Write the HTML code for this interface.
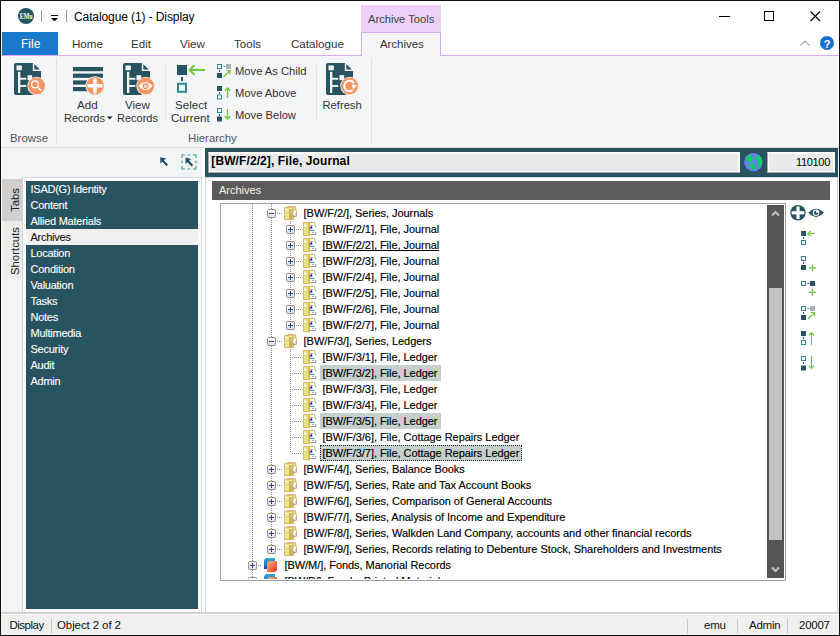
<!DOCTYPE html><html><head><meta charset="utf-8"><style>
html,body{margin:0;padding:0;}
body{width:840px;height:636px;position:relative;overflow:hidden;background:#fff;font-family:"Liberation Sans", sans-serif;}
div{box-sizing:border-box;}
svg{display:block;}
</style></head><body>
<svg style="position:absolute;left:18px;top:8px;" width="16" height="16" viewBox="0 0 16 16"><circle cx="8" cy="8" r="8" fill="#275460"/><text x="1.8" y="11.3" font-family="Liberation Serif" font-size="8.4" fill="#fff" font-weight="bold" textLength="12.8" lengthAdjust="spacingAndGlyphs">EMu</text></svg>
<div style="position:absolute;left:41px;top:10px;width:1px;height:12px;background:#9a9a9a"></div>
<div style="position:absolute;left:51px;top:15px;width:7px;height:1px;background:#000"></div>
<svg style="position:absolute;left:51px;top:17px;" width="7" height="5" viewBox="0 0 7 5"><path d="M0 1 L7 1 L3.5 4.3 Z" fill="#000"/></svg>
<div style="position:absolute;left:66px;top:10px;width:1px;height:12px;background:#9a9a9a"></div>
<div style="position:absolute;top:10.84px;font-size:12px;line-height:12px;color:#000;white-space:nowrap;letter-spacing:-0.1px;left:74px;">Catalogue (1) - Display</div>
<div style="position:absolute;left:719px;top:16px;width:11px;height:1px;background:#000"></div>
<div style="position:absolute;left:764px;top:11px;width:10px;height:10px;border:1px solid #000"></div>
<svg style="position:absolute;left:810px;top:11px;" width="11" height="11" viewBox="0 0 11 11"><path d="M0.5 0.5 L10 10 M10 0.5 L0.5 10" stroke="#000" stroke-width="1.1"/></svg>
<div style="position:absolute;left:361px;top:5px;width:80px;height:27px;background:#ecd0f9"></div>
<div style="position:absolute;top:13.52px;font-size:11.2px;line-height:11.2px;color:#444;white-space:nowrap;left:368px;">Archive Tools</div>
<div style="position:absolute;left:2px;top:32px;width:56px;height:23px;background:#1979ca"></div>
<div style="position:absolute;top:37.84px;font-size:12px;line-height:12px;color:#fff;white-space:nowrap;left:21px;">File</div>
<div style="position:absolute;top:38.18px;font-size:11.6px;line-height:11.6px;color:#333;white-space:nowrap;left:72px;">Home</div>
<div style="position:absolute;top:38.18px;font-size:11.6px;line-height:11.6px;color:#333;white-space:nowrap;left:131px;">Edit</div>
<div style="position:absolute;top:38.18px;font-size:11.6px;line-height:11.6px;color:#333;white-space:nowrap;left:180px;">View</div>
<div style="position:absolute;top:38.18px;font-size:11.6px;line-height:11.6px;color:#333;white-space:nowrap;left:234px;">Tools</div>
<div style="position:absolute;top:38.18px;font-size:11.6px;line-height:11.6px;color:#333;white-space:nowrap;left:291px;">Catalogue</div>
<div style="position:absolute;left:1px;top:55px;width:838px;height:1px;background:#d9a9f2"></div>
<div style="position:absolute;left:361px;top:32px;width:80px;height:24px;background:#f4f5f7;border:1px solid #d9a9f2;border-bottom:none"></div>
<div style="position:absolute;top:39.15px;font-size:11.4px;line-height:11.4px;color:#333;white-space:nowrap;left:380px;">Archives</div>
<svg style="position:absolute;left:800px;top:40px;" width="10" height="6" viewBox="0 0 10 6"><path d="M0.5 5.5 L5 1 L9.5 5.5" stroke="#aaa" stroke-width="1.2" fill="none"/></svg>
<svg style="position:absolute;left:820px;top:36px;" width="14" height="14" viewBox="0 0 14 14"><circle cx="7" cy="7" r="7" fill="#1b6fd1"/><text x="7" y="11.5" font-family="Liberation Sans" font-weight="bold" font-size="11" fill="#fff" text-anchor="middle">?</text></svg>
<div style="position:absolute;left:1px;top:56px;width:838px;height:91px;background:#f4f5f7"></div>
<div style="position:absolute;left:1px;top:147px;width:838px;height:1px;background:#dcdcdc"></div>
<div style="position:absolute;left:56px;top:58px;width:1px;height:86px;background:#e2e3e5"></div>
<div style="position:absolute;left:371px;top:58px;width:1px;height:86px;background:#e2e3e5"></div>
<div style="position:absolute;left:165px;top:65px;width:1px;height:55px;background:#e2e3e5"></div>
<div style="position:absolute;left:316px;top:65px;width:1px;height:55px;background:#e2e3e5"></div>
<svg style="position:absolute;left:14px;top:63px;" width="33" height="34" viewBox="0 0 33 34"><path d="M2 0 H18.8 V8.1 H27 V30 Q27 32 25 32 H2 Q0 32 0 30 V2 Q0 0 2 0 Z" fill="#275460"/>
<path d="M20.3 1.2 V6.6 H25.9 Z" fill="#275460"/>
<rect x="2.5" y="2.5" width="5.3" height="4.7" fill="#f4f5f7"/>
<rect x="4" y="8.8" width="2.3" height="21.2" fill="#f4f5f7"/>
<rect x="6" y="14.8" width="6.3" height="1.9" fill="#f4f5f7"/>
<rect x="6" y="22" width="6.3" height="1.9" fill="#f4f5f7"/>
<rect x="13.5" y="12.2" width="4.7" height="5" fill="#f4f5f7"/>
<g transform="translate(0,0)"><circle cx="22.6" cy="23" r="9.3" fill="#f4f5f7"/>
<circle cx="22.6" cy="23" r="8.5" fill="#f99460"/><circle cx="21" cy="21.4" r="3.4" fill="none" stroke="#fff" stroke-width="1.3"/><path d="M23.4 23.8 L27.2 27.8" stroke="#fff" stroke-width="1.5"/></g></svg>
<svg style="position:absolute;left:123px;top:63px;" width="33" height="34" viewBox="0 0 33 34"><path d="M2 0 H18.8 V8.1 H27 V30 Q27 32 25 32 H2 Q0 32 0 30 V2 Q0 0 2 0 Z" fill="#275460"/>
<path d="M20.3 1.2 V6.6 H25.9 Z" fill="#275460"/>
<rect x="2.5" y="2.5" width="5.3" height="4.7" fill="#f4f5f7"/>
<rect x="4" y="8.8" width="2.3" height="21.2" fill="#f4f5f7"/>
<rect x="6" y="14.8" width="6.3" height="1.9" fill="#f4f5f7"/>
<rect x="6" y="22" width="6.3" height="1.9" fill="#f4f5f7"/>
<rect x="13.5" y="12.2" width="4.7" height="5" fill="#f4f5f7"/>
<g transform="translate(0,0)"><circle cx="22.6" cy="23" r="9.3" fill="#f4f5f7"/>
<circle cx="22.6" cy="23" r="8.5" fill="#f99460"/><path d="M15.6 23 Q22.6 15 29.6 23 Q22.6 31 15.6 23 Z" fill="#fff"/><circle cx="22.6" cy="23" r="2.4" fill="#fff" stroke="#f99460" stroke-width="1.4"/><path d="M22.6 21.6 V23 H24" stroke="#f99460" stroke-width="0.9" fill="none"/></g></svg>
<svg style="position:absolute;left:326px;top:63px;" width="33" height="34" viewBox="0 0 33 34"><path d="M2 0 H18.8 V8.1 H27 V30 Q27 32 25 32 H2 Q0 32 0 30 V2 Q0 0 2 0 Z" fill="#275460"/>
<path d="M20.3 1.2 V6.6 H25.9 Z" fill="#275460"/>
<rect x="2.5" y="2.5" width="5.3" height="4.7" fill="#f4f5f7"/>
<rect x="4" y="8.8" width="2.3" height="21.2" fill="#f4f5f7"/>
<rect x="6" y="14.8" width="6.3" height="1.9" fill="#f4f5f7"/>
<rect x="6" y="22" width="6.3" height="1.9" fill="#f4f5f7"/>
<rect x="13.5" y="12.2" width="4.7" height="5" fill="#f4f5f7"/>
<g transform="translate(1,0)"><circle cx="22.6" cy="23" r="9.3" fill="#f4f5f7"/>
<circle cx="22.6" cy="23" r="8.5" fill="#f99460"/><path d="M26.01 27.06 A5.3 5.3 0 1 1 26.94 19.96" fill="none" stroke="#fff" stroke-width="2"/><path d="M24.6 21.2 L30 22.2 L26.3 26.2 Z" fill="#fff"/></g></svg>
<svg style="position:absolute;left:73px;top:66px;" width="33" height="30" viewBox="0 0 33 30"><rect x="0" y="1" width="30" height="4.2" fill="#275460"/>
<rect x="0" y="7.6" width="30" height="4.2" fill="#275460"/>
<rect x="0" y="14.4" width="30" height="4.2" fill="#275460"/>
<rect x="0" y="21" width="30" height="4.2" fill="#275460"/>
<circle cx="22" cy="19.8" r="9.6" fill="#f4f5f7"/>
<circle cx="22" cy="19.8" r="8.8" fill="#f99460"/>
<path d="M22 13.6 V26 M15.8 19.8 H28.2" stroke="#fff" stroke-width="3.6" stroke-linecap="round"/></svg>
<div style="position:absolute;top:132.55px;font-size:11.4px;line-height:11.4px;color:#555;white-space:nowrap;left:10px;">Browse</div>
<div style="position:absolute;top:98.78px;font-size:11.6px;line-height:11.6px;color:#333;white-space:nowrap;left:77px;">Add</div>
<div style="position:absolute;top:113.29px;font-size:11px;line-height:11px;color:#333;white-space:nowrap;left:64px;">Records</div>
<svg style="position:absolute;left:107px;top:116px;" width="6" height="4" viewBox="0 0 6 4"><path d="M0 0.5 H5.5 L2.75 3.5 Z" fill="#222"/></svg>
<div style="position:absolute;top:98.78px;font-size:11.6px;line-height:11.6px;color:#333;white-space:nowrap;left:125px;">View</div>
<div style="position:absolute;top:113.29px;font-size:11px;line-height:11px;color:#333;white-space:nowrap;left:117px;">Records</div>
<svg style="position:absolute;left:176px;top:63px;" width="32" height="32" viewBox="0 0 32 32"><rect x="1" y="2" width="10" height="10" fill="#275460"/>
<rect x="5" y="14" width="2" height="4" fill="#275460"/>
<rect x="2" y="20.8" width="8" height="8" fill="#fff" stroke="#2b8a93" stroke-width="2"/>
<path d="M13.5 7 H29" stroke="#72c63c" stroke-width="2"/>
<path d="M18.5 2.2 L13.5 7 L18.5 11.8" stroke="#72c63c" stroke-width="2" fill="none"/></svg>
<div style="position:absolute;top:98.98px;font-size:11.6px;line-height:11.6px;color:#333;white-space:nowrap;left:175px;">Select</div>
<div style="position:absolute;top:111.78px;font-size:11.6px;line-height:11.6px;color:#333;white-space:nowrap;left:171px;">Current</div>
<svg style="position:absolute;left:217px;top:64px;" width="16" height="14" viewBox="0 0 16 14"><rect x="0.5" y="0.5" width="4" height="4" fill="#fff" stroke="#2b8a93" stroke-width="1"/>
<rect x="6.5" y="2" width="2" height="1" fill="#888"/>
<rect x="9" y="0" width="5" height="5" fill="#a8b4b8"/>
<rect x="2" y="6" width="1" height="2" fill="#275460"/>
<rect x="0" y="9" width="5" height="5" fill="#275460"/>
<path d="M6.5 13 L13 6.5 M9.3 6.5 H13 V10.2" stroke="#72c63c" stroke-width="1.2" fill="none"/></svg>
<svg style="position:absolute;left:217px;top:86px;" width="16" height="14" viewBox="0 0 16 14"><rect x="0" y="0" width="5" height="5" fill="#275460"/><rect x="0.5" y="9" width="4" height="4" fill="#fff" stroke="#2b8a93" stroke-width="1"/><rect x="2" y="6" width="1" height="2" fill="#275460"/><path d="M10.5 2 V12 M7.8 4.8 L10.5 2 L13.2 4.8" stroke="#72c63c" stroke-width="1.3" fill="none"/></svg>
<svg style="position:absolute;left:217px;top:108px;" width="16" height="14" viewBox="0 0 16 14"><rect x="0.5" y="0.5" width="4" height="4" fill="#fff" stroke="#2b8a93" stroke-width="1"/><rect x="0" y="8.5" width="5" height="5" fill="#275460"/><rect x="2" y="6" width="1" height="2" fill="#275460"/><path d="M10.5 1 V11 M7.8 8.2 L10.5 11 L13.2 8.2" stroke="#72c63c" stroke-width="1.3" fill="none"/></svg>
<div style="position:absolute;top:65.52px;font-size:11.2px;line-height:11.2px;color:#333;white-space:nowrap;left:235px;">Move As Child</div>
<div style="position:absolute;top:87.52px;font-size:11.2px;line-height:11.2px;color:#333;white-space:nowrap;left:235px;">Move Above</div>
<div style="position:absolute;top:109.52px;font-size:11.2px;line-height:11.2px;color:#333;white-space:nowrap;left:235px;">Move Below</div>
<div style="position:absolute;top:99.52px;font-size:11.2px;line-height:11.2px;color:#333;white-space:nowrap;left:322.5px;">Refresh</div>
<div style="position:absolute;top:132.55px;font-size:11.4px;line-height:11.4px;color:#555;white-space:nowrap;left:188px;">Hierarchy</div>
<div style="position:absolute;left:1px;top:148px;width:838px;height:466px;background:#f3f4f6"></div>
<svg style="position:absolute;left:159px;top:156px;" width="11" height="12" viewBox="0 0 11 12"><path d="M1.2 1.2 L1.4 7.6 L3.3 5.8 L7.4 10.2 L9 8.6 L4.9 4.2 L7.2 2.6 Z" fill="#275460"/></svg>
<svg style="position:absolute;left:181px;top:154px;" width="17" height="17" viewBox="0 0 17 17"><path d="M1 4 V1 H4 M12 1 H15 V4 M15 12 V15 H12 M4 15 H1 V12 M6.8 1 H9.2 M15 6.8 V9.2 M6.8 15 H9.2 M1 6.8 V9.2" fill="none" stroke="#72b6ba" stroke-width="1.7"/><path d="M4.4 3.6 L4.6 10 L6.5 8.2 L10.6 12.6 L12.2 11 L8.1 6.6 L10.4 5 Z" fill="#275460"/></svg>
<div style="position:absolute;left:2px;top:179px;width:20px;height:42px;background:#cfcfcf"></div>
<div style="position:absolute;left:4px;top:221px;width:18px;height:58px;background:#ebebeb"></div>
<div style="position:absolute;left:5px;top:179px;width:20px;height:42px;display:flex;align-items:center;justify-content:center;"><div style="transform:rotate(-90deg);font-size:11.4px;color:#222;white-space:nowrap;">Tabs</div></div>
<div style="position:absolute;left:5px;top:222px;width:20px;height:57px;display:flex;align-items:center;justify-content:center;"><div style="transform:rotate(-90deg);font-size:11.4px;color:#222;white-space:nowrap;">Shortcuts</div></div>
<div style="position:absolute;left:22px;top:177px;width:180px;height:436px;background:#fbfbfb;border:1px solid #d5d5d5"></div>
<div style="position:absolute;left:26px;top:181px;width:172px;height:428px;background:#275460"></div>
<div style="position:absolute;top:184.19px;font-size:11px;line-height:11px;color:#fff;white-space:nowrap;letter-spacing:-0.25px;-webkit-text-stroke:0.1px #fff;left:30.5px;">ISAD(G) Identity</div>
<div style="position:absolute;top:200.19px;font-size:11px;line-height:11px;color:#fff;white-space:nowrap;letter-spacing:-0.25px;-webkit-text-stroke:0.1px #fff;left:30.5px;">Content</div>
<div style="position:absolute;top:216.19px;font-size:11px;line-height:11px;color:#fff;white-space:nowrap;letter-spacing:-0.25px;-webkit-text-stroke:0.1px #fff;left:30.5px;">Allied Materials</div>
<div style="position:absolute;left:26px;top:229px;width:172px;height:16px;background:#f0f0f0"></div>
<div style="position:absolute;top:232.19px;font-size:11px;line-height:11px;color:#111;white-space:nowrap;letter-spacing:-0.25px;-webkit-text-stroke:0.1px #111;left:30.5px;">Archives</div>
<div style="position:absolute;top:248.19px;font-size:11px;line-height:11px;color:#fff;white-space:nowrap;letter-spacing:-0.25px;-webkit-text-stroke:0.1px #fff;left:30.5px;">Location</div>
<div style="position:absolute;top:264.19px;font-size:11px;line-height:11px;color:#fff;white-space:nowrap;letter-spacing:-0.25px;-webkit-text-stroke:0.1px #fff;left:30.5px;">Condition</div>
<div style="position:absolute;top:280.19px;font-size:11px;line-height:11px;color:#fff;white-space:nowrap;letter-spacing:-0.25px;-webkit-text-stroke:0.1px #fff;left:30.5px;">Valuation</div>
<div style="position:absolute;top:296.19px;font-size:11px;line-height:11px;color:#fff;white-space:nowrap;letter-spacing:-0.25px;-webkit-text-stroke:0.1px #fff;left:30.5px;">Tasks</div>
<div style="position:absolute;top:312.19px;font-size:11px;line-height:11px;color:#fff;white-space:nowrap;letter-spacing:-0.25px;-webkit-text-stroke:0.1px #fff;left:30.5px;">Notes</div>
<div style="position:absolute;top:328.19px;font-size:11px;line-height:11px;color:#fff;white-space:nowrap;letter-spacing:-0.25px;-webkit-text-stroke:0.1px #fff;left:30.5px;">Multimedia</div>
<div style="position:absolute;top:344.19px;font-size:11px;line-height:11px;color:#fff;white-space:nowrap;letter-spacing:-0.25px;-webkit-text-stroke:0.1px #fff;left:30.5px;">Security</div>
<div style="position:absolute;top:360.19px;font-size:11px;line-height:11px;color:#fff;white-space:nowrap;letter-spacing:-0.25px;-webkit-text-stroke:0.1px #fff;left:30.5px;">Audit</div>
<div style="position:absolute;top:376.19px;font-size:11px;line-height:11px;color:#fff;white-space:nowrap;letter-spacing:-0.25px;-webkit-text-stroke:0.1px #fff;left:30.5px;">Admin</div>
<div style="position:absolute;left:202px;top:148px;width:3px;height:465px;background:#fff"></div>
<div style="position:absolute;left:205px;top:177px;width:633px;height:437px;background:#fff;border:1px solid #d5d5d5;border-bottom:2px solid #d0d0d0"></div>
<div style="position:absolute;left:205px;top:148px;width:633px;height:29px;background:#275460"></div>
<div style="position:absolute;left:208px;top:152px;width:532px;height:21px;background:#e9eaec;border:1px solid #fbfbfb;border-left-color:#a9a9a9;border-bottom-color:#a9a9a9;box-shadow:inset 1px -1px 0 #fbfbfb, inset -1px 1px 0 #fbfbfb"></div>
<div style="position:absolute;left:211.3px;top:152px;font-size:12px;line-height:18px;font-weight:bold;color:#000;white-space:nowrap;letter-spacing:0.1px">[BW/F/2/2], File, Journal</div>
<svg style="position:absolute;left:744px;top:152px;" width="19" height="20" viewBox="0 0 19 20"><circle cx="9.4" cy="10.1" r="9.2" fill="#6a80f0"/><path d="M2.2 7 Q3 3.5 6.5 3 Q9 3.2 9 6 Q8.6 9.5 6 10.6 Q3.5 10.5 2.2 7 Z M12 4 Q15 3 17.2 5.5 Q18.8 9 18 12 Q17 15.5 14.5 17 Q13.5 14 15 11.5 Q13.2 10 12.2 8 Q11.5 6 12 4 Z M5 12.5 Q8 10.6 11.2 12.5 Q11.6 15.5 10.5 18 Q8 17.5 6.5 15.5 Q5.2 14 5 12.5 Z" fill="#06d060"/></svg>
<div style="position:absolute;left:767px;top:152px;width:68px;height:21px;background:#e9eaec;border:1px solid #fbfbfb;border-left-color:#a9a9a9;border-bottom-color:#a9a9a9;box-shadow:inset 1px -1px 0 #fbfbfb, inset -1px 1px 0 #fbfbfb"></div>
<div style="position:absolute;top:156.69px;font-size:11px;line-height:11px;color:#000;white-space:nowrap;letter-spacing:-0.3px;right:10px;">110100</div>
<div style="position:absolute;left:212px;top:181px;width:618px;height:19px;background:#5b5b5b"></div>
<div style="position:absolute;top:184.69px;font-size:11px;line-height:11px;color:#f4f4f4;white-space:nowrap;left:219px;">Archives</div>
<div style="position:absolute;left:220px;top:203px;width:566px;height:378px;background:#fff;border:1px solid #a0a0a0"></div>
<div style="position:absolute;left:767px;top:205px;width:17px;height:373px;background:#555555"></div>
<div style="position:absolute;left:769px;top:288px;width:13px;height:252px;background:#c3c3c3"></div>
<svg style="position:absolute;left:771px;top:209px;" width="9" height="8" viewBox="0 0 9 8"><path d="M1 6.5 L4.5 3 L8 6.5" stroke="#bdbdbd" stroke-width="2.2" fill="none"/></svg>
<svg style="position:absolute;left:771px;top:566px;" width="9" height="8" viewBox="0 0 9 8"><path d="M1 1.5 L4.5 5 L8 1.5" stroke="#bdbdbd" stroke-width="2.2" fill="none"/></svg>
<svg style="position:absolute;left:790px;top:205px;" width="36" height="16" viewBox="0 0 36 16"><circle cx="8" cy="7.8" r="7.7" fill="#275460"/><rect x="6.4" y="1.5" width="3.2" height="12.6" fill="#fff"/><rect x="1.7" y="6.2" width="12.6" height="3.2" fill="#fff"/><path d="M18.4 7.8 Q26 -0.5 33.8 7.8 Q26 16 18.4 7.8 Z" fill="#275460"/><circle cx="26.1" cy="7.8" r="3.3" fill="#fff"/><path d="M26.1 7.8 V5.6 A2.2 2.2 0 1 0 28.3 7.8 Z" fill="#275460"/></svg>
<svg style="position:absolute;left:801px;top:231px;" width="16" height="16" viewBox="0 0 16 16"><rect x="0" y="0" width="5" height="5" fill="#275460"/><rect x="2" y="6" width="1" height="2" fill="#275460"/><rect x="0.5" y="9.5" width="4" height="4" fill="#fff" stroke="#2b8a93" stroke-width="1"/><path d="M7 2.5 H14 M9.5 0 L7 2.5 L9.5 5" stroke="#72c63c" stroke-width="1.2" fill="none"/></svg>
<svg style="position:absolute;left:801px;top:256px;" width="16" height="16" viewBox="0 0 16 16"><rect x="0.5" y="0.5" width="4" height="4" fill="#fff" stroke="#2b8a93" stroke-width="1"/><rect x="2" y="6" width="1" height="2" fill="#275460"/><rect x="0" y="9" width="5" height="5" fill="#275460"/><path d="M8 11.8 H15 M11.5 8.3 V15.3" stroke="#72c63c" stroke-width="1.3"/></svg>
<svg style="position:absolute;left:801px;top:281px;" width="16" height="16" viewBox="0 0 16 16"><rect x="0.5" y="0.5" width="4" height="4" fill="#fff" stroke="#2b8a93" stroke-width="1"/><rect x="6.5" y="2" width="2" height="1" fill="#275460"/><rect x="9" y="0" width="5" height="5" fill="#275460"/><path d="M8 11.3 H15 M11.5 7.8 V14.8" stroke="#72c63c" stroke-width="1.3"/></svg>
<svg style="position:absolute;left:801px;top:306px;" width="16" height="16" viewBox="0 0 16 16"><rect x="0.5" y="0.5" width="4" height="4" fill="#fff" stroke="#2b8a93" stroke-width="1"/><rect x="6.5" y="2" width="2" height="1" fill="#888"/><rect x="9" y="0" width="5" height="5" fill="#a8b4b8"/><rect x="2" y="6" width="1" height="2" fill="#275460"/><rect x="0" y="9" width="5" height="5" fill="#275460"/><path d="M7 13 L13.5 6.5 M9.8 6.5 H13.5 V10.2" stroke="#72c63c" stroke-width="1.2" fill="none"/></svg>
<svg style="position:absolute;left:801px;top:331px;" width="16" height="16" viewBox="0 0 16 16"><rect x="0" y="0" width="5" height="5" fill="#275460"/><rect x="2" y="6" width="1" height="2" fill="#275460"/><rect x="0.5" y="9.5" width="4" height="4" fill="#fff" stroke="#2b8a93" stroke-width="1"/><path d="M10.5 1.5 V14 M7.8 4.3 L10.5 1.5 L13.2 4.3" stroke="#72c63c" stroke-width="1.2" fill="none"/></svg>
<svg style="position:absolute;left:801px;top:356px;" width="16" height="16" viewBox="0 0 16 16"><rect x="0.5" y="0.5" width="4" height="4" fill="#fff" stroke="#2b8a93" stroke-width="1"/><rect x="2" y="6" width="1" height="2" fill="#275460"/><rect x="0" y="9.5" width="5" height="5" fill="#275460"/><path d="M10.5 0 V12.5 M7.8 9.7 L10.5 12.5 L13.2 9.7" stroke="#72c63c" stroke-width="1.2" fill="none"/></svg>
<div style="position:absolute;left:0;top:0;width:840px;height:636px;clip-path:inset(204px 54px 57px 221px)">
<div style="position:absolute;left:320px;top:365px;width:121px;height:16px;background:#c5d0cd"></div>
<div style="position:absolute;left:320px;top:413px;width:121px;height:16px;background:#c5d0cd"></div>
<div style="position:absolute;left:320px;top:445px;width:202px;height:16px;background:#c5d0cd;border:1px dotted #222"></div>
<svg style="position:absolute;left:221px;top:204px;overflow:hidden" width="545" height="376" viewBox="0 0 545 376"><defs><linearGradient id="exg" x1="0" y1="0" x2="0" y2="1"><stop offset="0" stop-color="#fff"/><stop offset="1" stop-color="#dedede"/></linearGradient><linearGradient id="fb" x1="0" y1="0" x2="0" y2="1"><stop offset="0" stop-color="#35a6d0"/><stop offset="0.5" stop-color="#1a8ad6"/><stop offset="1" stop-color="#0a3fd0"/></linearGradient><linearGradient id="fo" x1="0" y1="0" x2="1" y2="1"><stop offset="0" stop-color="#f6b070"/><stop offset="0.5" stop-color="#f07850"/><stop offset="1" stop-color="#ff1a10"/></linearGradient></defs><line x1="31.5" y1="0" x2="31.5" y2="376" stroke="#888" stroke-width="1" stroke-dasharray="1 1"/><line x1="50.5" y1="0" x2="50.5" y2="345" stroke="#888" stroke-width="1" stroke-dasharray="1 1"/><line x1="69.5" y1="17" x2="69.5" y2="121" stroke="#888" stroke-width="1" stroke-dasharray="1 1"/><line x1="69.5" y1="145" x2="69.5" y2="249" stroke="#888" stroke-width="1" stroke-dasharray="1 1"/><line x1="56" y1="9.5" x2="61" y2="9.5" stroke="#888" stroke-width="1" stroke-dasharray="1 1"/><g transform="translate(63,2)"><path d="M3.5 0.5 H11.5 V10.5 H3.5 Z" fill="#e4e49a" stroke="#e2b878" stroke-width="1"/><path d="M0.5 1.3 H9.5 V13.5 H0.5 Z" fill="#e2e598" stroke="#e3b070" stroke-width="1"/><rect x="1.4" y="3" width="1.8" height="1" fill="#fff"/><path d="M5 3.2 H8.8 V13.8 H5 Z" fill="#d4b048"/><rect x="6.2" y="4" width="1.4" height="4" fill="#b8c890"/><path d="M9 4 H12.5 V10.5 H9 Z" fill="#fff" stroke="#dcb060" stroke-width="0.9"/><rect x="9.3" y="9.2" width="1.3" height="2" fill="#2a98d8"/><rect x="11.4" y="7.6" width="1.3" height="1.6" fill="#2a98d8"/></g><rect x="46.5" y="5.5" width="8" height="8" rx="1" fill="url(#exg)" stroke="#8f8f8f"/><rect x="48" y="9" width="5" height="1" fill="#2b48a0"/><line x1="75" y1="25.5" x2="80" y2="25.5" stroke="#888" stroke-width="1" stroke-dasharray="1 1"/><g transform="translate(82,18)"><rect x="6" y="0.5" width="6" height="12" fill="#fff"/><path d="M0 0.5 H11.8 V4" stroke="#e0b660" stroke-width="1" fill="none"/><rect x="12" y="4" width="1.2" height="1.2" fill="#e0b060"/><path d="M7.5 12.5 H12.7 V10" stroke="#9a9a9a" stroke-width="1" fill="none"/><path d="M0.5 0.5 H6.5 V13.5 H0.5 Z" fill="#e0e48a" stroke="#e2b46a" stroke-width="1"/><rect x="5.5" y="1" width="1.6" height="12.8" fill="#e8a830"/><path d="M1.4 2.2 L3.8 3.6 L1.4 5 Z" fill="#fff"/><path d="M6.6 6.8 L8.6 4.2 V6.8" stroke="#3b40c8" stroke-width="1.2" fill="none"/><rect x="6.8" y="7.9" width="4.4" height="1.1" fill="#28a0b0"/><rect x="9" y="9.8" width="2" height="1" fill="#6aa8e8"/></g><rect x="65.5" y="21.5" width="8" height="8" rx="1" fill="url(#exg)" stroke="#8f8f8f"/><rect x="67" y="25" width="5" height="1" fill="#2b48a0"/><rect x="69" y="23" width="1" height="5" fill="#2b48a0"/><line x1="75" y1="41.5" x2="80" y2="41.5" stroke="#888" stroke-width="1" stroke-dasharray="1 1"/><g transform="translate(82,34)"><rect x="6" y="0.5" width="6" height="12" fill="#fff"/><path d="M0 0.5 H11.8 V4" stroke="#e0b660" stroke-width="1" fill="none"/><rect x="12" y="4" width="1.2" height="1.2" fill="#e0b060"/><path d="M7.5 12.5 H12.7 V10" stroke="#9a9a9a" stroke-width="1" fill="none"/><path d="M0.5 0.5 H6.5 V13.5 H0.5 Z" fill="#e0e48a" stroke="#e2b46a" stroke-width="1"/><rect x="5.5" y="1" width="1.6" height="12.8" fill="#e8a830"/><path d="M1.4 2.2 L3.8 3.6 L1.4 5 Z" fill="#fff"/><path d="M6.6 6.8 L8.6 4.2 V6.8" stroke="#3b40c8" stroke-width="1.2" fill="none"/><rect x="6.8" y="7.9" width="4.4" height="1.1" fill="#28a0b0"/><rect x="9" y="9.8" width="2" height="1" fill="#6aa8e8"/></g><rect x="65.5" y="37.5" width="8" height="8" rx="1" fill="url(#exg)" stroke="#8f8f8f"/><rect x="67" y="41" width="5" height="1" fill="#2b48a0"/><rect x="69" y="39" width="1" height="5" fill="#2b48a0"/><line x1="75" y1="57.5" x2="80" y2="57.5" stroke="#888" stroke-width="1" stroke-dasharray="1 1"/><g transform="translate(82,50)"><rect x="6" y="0.5" width="6" height="12" fill="#fff"/><path d="M0 0.5 H11.8 V4" stroke="#e0b660" stroke-width="1" fill="none"/><rect x="12" y="4" width="1.2" height="1.2" fill="#e0b060"/><path d="M7.5 12.5 H12.7 V10" stroke="#9a9a9a" stroke-width="1" fill="none"/><path d="M0.5 0.5 H6.5 V13.5 H0.5 Z" fill="#e0e48a" stroke="#e2b46a" stroke-width="1"/><rect x="5.5" y="1" width="1.6" height="12.8" fill="#e8a830"/><path d="M1.4 2.2 L3.8 3.6 L1.4 5 Z" fill="#fff"/><path d="M6.6 6.8 L8.6 4.2 V6.8" stroke="#3b40c8" stroke-width="1.2" fill="none"/><rect x="6.8" y="7.9" width="4.4" height="1.1" fill="#28a0b0"/><rect x="9" y="9.8" width="2" height="1" fill="#6aa8e8"/></g><rect x="65.5" y="53.5" width="8" height="8" rx="1" fill="url(#exg)" stroke="#8f8f8f"/><rect x="67" y="57" width="5" height="1" fill="#2b48a0"/><rect x="69" y="55" width="1" height="5" fill="#2b48a0"/><line x1="75" y1="73.5" x2="80" y2="73.5" stroke="#888" stroke-width="1" stroke-dasharray="1 1"/><g transform="translate(82,66)"><rect x="6" y="0.5" width="6" height="12" fill="#fff"/><path d="M0 0.5 H11.8 V4" stroke="#e0b660" stroke-width="1" fill="none"/><rect x="12" y="4" width="1.2" height="1.2" fill="#e0b060"/><path d="M7.5 12.5 H12.7 V10" stroke="#9a9a9a" stroke-width="1" fill="none"/><path d="M0.5 0.5 H6.5 V13.5 H0.5 Z" fill="#e0e48a" stroke="#e2b46a" stroke-width="1"/><rect x="5.5" y="1" width="1.6" height="12.8" fill="#e8a830"/><path d="M1.4 2.2 L3.8 3.6 L1.4 5 Z" fill="#fff"/><path d="M6.6 6.8 L8.6 4.2 V6.8" stroke="#3b40c8" stroke-width="1.2" fill="none"/><rect x="6.8" y="7.9" width="4.4" height="1.1" fill="#28a0b0"/><rect x="9" y="9.8" width="2" height="1" fill="#6aa8e8"/></g><rect x="65.5" y="69.5" width="8" height="8" rx="1" fill="url(#exg)" stroke="#8f8f8f"/><rect x="67" y="73" width="5" height="1" fill="#2b48a0"/><rect x="69" y="71" width="1" height="5" fill="#2b48a0"/><line x1="75" y1="89.5" x2="80" y2="89.5" stroke="#888" stroke-width="1" stroke-dasharray="1 1"/><g transform="translate(82,82)"><rect x="6" y="0.5" width="6" height="12" fill="#fff"/><path d="M0 0.5 H11.8 V4" stroke="#e0b660" stroke-width="1" fill="none"/><rect x="12" y="4" width="1.2" height="1.2" fill="#e0b060"/><path d="M7.5 12.5 H12.7 V10" stroke="#9a9a9a" stroke-width="1" fill="none"/><path d="M0.5 0.5 H6.5 V13.5 H0.5 Z" fill="#e0e48a" stroke="#e2b46a" stroke-width="1"/><rect x="5.5" y="1" width="1.6" height="12.8" fill="#e8a830"/><path d="M1.4 2.2 L3.8 3.6 L1.4 5 Z" fill="#fff"/><path d="M6.6 6.8 L8.6 4.2 V6.8" stroke="#3b40c8" stroke-width="1.2" fill="none"/><rect x="6.8" y="7.9" width="4.4" height="1.1" fill="#28a0b0"/><rect x="9" y="9.8" width="2" height="1" fill="#6aa8e8"/></g><rect x="65.5" y="85.5" width="8" height="8" rx="1" fill="url(#exg)" stroke="#8f8f8f"/><rect x="67" y="89" width="5" height="1" fill="#2b48a0"/><rect x="69" y="87" width="1" height="5" fill="#2b48a0"/><line x1="75" y1="105.5" x2="80" y2="105.5" stroke="#888" stroke-width="1" stroke-dasharray="1 1"/><g transform="translate(82,98)"><rect x="6" y="0.5" width="6" height="12" fill="#fff"/><path d="M0 0.5 H11.8 V4" stroke="#e0b660" stroke-width="1" fill="none"/><rect x="12" y="4" width="1.2" height="1.2" fill="#e0b060"/><path d="M7.5 12.5 H12.7 V10" stroke="#9a9a9a" stroke-width="1" fill="none"/><path d="M0.5 0.5 H6.5 V13.5 H0.5 Z" fill="#e0e48a" stroke="#e2b46a" stroke-width="1"/><rect x="5.5" y="1" width="1.6" height="12.8" fill="#e8a830"/><path d="M1.4 2.2 L3.8 3.6 L1.4 5 Z" fill="#fff"/><path d="M6.6 6.8 L8.6 4.2 V6.8" stroke="#3b40c8" stroke-width="1.2" fill="none"/><rect x="6.8" y="7.9" width="4.4" height="1.1" fill="#28a0b0"/><rect x="9" y="9.8" width="2" height="1" fill="#6aa8e8"/></g><rect x="65.5" y="101.5" width="8" height="8" rx="1" fill="url(#exg)" stroke="#8f8f8f"/><rect x="67" y="105" width="5" height="1" fill="#2b48a0"/><rect x="69" y="103" width="1" height="5" fill="#2b48a0"/><line x1="75" y1="121.5" x2="80" y2="121.5" stroke="#888" stroke-width="1" stroke-dasharray="1 1"/><g transform="translate(82,114)"><rect x="6" y="0.5" width="6" height="12" fill="#fff"/><path d="M0 0.5 H11.8 V4" stroke="#e0b660" stroke-width="1" fill="none"/><rect x="12" y="4" width="1.2" height="1.2" fill="#e0b060"/><path d="M7.5 12.5 H12.7 V10" stroke="#9a9a9a" stroke-width="1" fill="none"/><path d="M0.5 0.5 H6.5 V13.5 H0.5 Z" fill="#e0e48a" stroke="#e2b46a" stroke-width="1"/><rect x="5.5" y="1" width="1.6" height="12.8" fill="#e8a830"/><path d="M1.4 2.2 L3.8 3.6 L1.4 5 Z" fill="#fff"/><path d="M6.6 6.8 L8.6 4.2 V6.8" stroke="#3b40c8" stroke-width="1.2" fill="none"/><rect x="6.8" y="7.9" width="4.4" height="1.1" fill="#28a0b0"/><rect x="9" y="9.8" width="2" height="1" fill="#6aa8e8"/></g><rect x="65.5" y="117.5" width="8" height="8" rx="1" fill="url(#exg)" stroke="#8f8f8f"/><rect x="67" y="121" width="5" height="1" fill="#2b48a0"/><rect x="69" y="119" width="1" height="5" fill="#2b48a0"/><line x1="56" y1="137.5" x2="61" y2="137.5" stroke="#888" stroke-width="1" stroke-dasharray="1 1"/><g transform="translate(63,130)"><path d="M3.5 0.5 H11.5 V10.5 H3.5 Z" fill="#e4e49a" stroke="#e2b878" stroke-width="1"/><path d="M0.5 1.3 H9.5 V13.5 H0.5 Z" fill="#e2e598" stroke="#e3b070" stroke-width="1"/><rect x="1.4" y="3" width="1.8" height="1" fill="#fff"/><path d="M5 3.2 H8.8 V13.8 H5 Z" fill="#d4b048"/><rect x="6.2" y="4" width="1.4" height="4" fill="#b8c890"/><path d="M9 4 H12.5 V10.5 H9 Z" fill="#fff" stroke="#dcb060" stroke-width="0.9"/><rect x="9.3" y="9.2" width="1.3" height="2" fill="#2a98d8"/><rect x="11.4" y="7.6" width="1.3" height="1.6" fill="#2a98d8"/></g><rect x="46.5" y="133.5" width="8" height="8" rx="1" fill="url(#exg)" stroke="#8f8f8f"/><rect x="48" y="137" width="5" height="1" fill="#2b48a0"/><line x1="71" y1="153.5" x2="80" y2="153.5" stroke="#888" stroke-width="1" stroke-dasharray="1 1"/><g transform="translate(82,146)"><rect x="6" y="0.5" width="6" height="12" fill="#fff"/><path d="M0 0.5 H11.8 V4" stroke="#e0b660" stroke-width="1" fill="none"/><rect x="12" y="4" width="1.2" height="1.2" fill="#e0b060"/><path d="M7.5 12.5 H12.7 V10" stroke="#9a9a9a" stroke-width="1" fill="none"/><path d="M0.5 0.5 H6.5 V13.5 H0.5 Z" fill="#e0e48a" stroke="#e2b46a" stroke-width="1"/><rect x="5.5" y="1" width="1.6" height="12.8" fill="#e8a830"/><path d="M1.4 2.2 L3.8 3.6 L1.4 5 Z" fill="#fff"/><path d="M6.6 6.8 L8.6 4.2 V6.8" stroke="#3b40c8" stroke-width="1.2" fill="none"/><rect x="6.8" y="7.9" width="4.4" height="1.1" fill="#28a0b0"/><rect x="9" y="9.8" width="2" height="1" fill="#6aa8e8"/></g><line x1="71" y1="169.5" x2="80" y2="169.5" stroke="#888" stroke-width="1" stroke-dasharray="1 1"/><g transform="translate(82,162)"><rect x="6" y="0.5" width="6" height="12" fill="#fff"/><path d="M0 0.5 H11.8 V4" stroke="#e0b660" stroke-width="1" fill="none"/><rect x="12" y="4" width="1.2" height="1.2" fill="#e0b060"/><path d="M7.5 12.5 H12.7 V10" stroke="#9a9a9a" stroke-width="1" fill="none"/><path d="M0.5 0.5 H6.5 V13.5 H0.5 Z" fill="#e0e48a" stroke="#e2b46a" stroke-width="1"/><rect x="5.5" y="1" width="1.6" height="12.8" fill="#e8a830"/><path d="M1.4 2.2 L3.8 3.6 L1.4 5 Z" fill="#fff"/><path d="M6.6 6.8 L8.6 4.2 V6.8" stroke="#3b40c8" stroke-width="1.2" fill="none"/><rect x="6.8" y="7.9" width="4.4" height="1.1" fill="#28a0b0"/><rect x="9" y="9.8" width="2" height="1" fill="#6aa8e8"/></g><line x1="71" y1="185.5" x2="80" y2="185.5" stroke="#888" stroke-width="1" stroke-dasharray="1 1"/><g transform="translate(82,178)"><rect x="6" y="0.5" width="6" height="12" fill="#fff"/><path d="M0 0.5 H11.8 V4" stroke="#e0b660" stroke-width="1" fill="none"/><rect x="12" y="4" width="1.2" height="1.2" fill="#e0b060"/><path d="M7.5 12.5 H12.7 V10" stroke="#9a9a9a" stroke-width="1" fill="none"/><path d="M0.5 0.5 H6.5 V13.5 H0.5 Z" fill="#e0e48a" stroke="#e2b46a" stroke-width="1"/><rect x="5.5" y="1" width="1.6" height="12.8" fill="#e8a830"/><path d="M1.4 2.2 L3.8 3.6 L1.4 5 Z" fill="#fff"/><path d="M6.6 6.8 L8.6 4.2 V6.8" stroke="#3b40c8" stroke-width="1.2" fill="none"/><rect x="6.8" y="7.9" width="4.4" height="1.1" fill="#28a0b0"/><rect x="9" y="9.8" width="2" height="1" fill="#6aa8e8"/></g><line x1="71" y1="201.5" x2="80" y2="201.5" stroke="#888" stroke-width="1" stroke-dasharray="1 1"/><g transform="translate(82,194)"><rect x="6" y="0.5" width="6" height="12" fill="#fff"/><path d="M0 0.5 H11.8 V4" stroke="#e0b660" stroke-width="1" fill="none"/><rect x="12" y="4" width="1.2" height="1.2" fill="#e0b060"/><path d="M7.5 12.5 H12.7 V10" stroke="#9a9a9a" stroke-width="1" fill="none"/><path d="M0.5 0.5 H6.5 V13.5 H0.5 Z" fill="#e0e48a" stroke="#e2b46a" stroke-width="1"/><rect x="5.5" y="1" width="1.6" height="12.8" fill="#e8a830"/><path d="M1.4 2.2 L3.8 3.6 L1.4 5 Z" fill="#fff"/><path d="M6.6 6.8 L8.6 4.2 V6.8" stroke="#3b40c8" stroke-width="1.2" fill="none"/><rect x="6.8" y="7.9" width="4.4" height="1.1" fill="#28a0b0"/><rect x="9" y="9.8" width="2" height="1" fill="#6aa8e8"/></g><line x1="71" y1="217.5" x2="80" y2="217.5" stroke="#888" stroke-width="1" stroke-dasharray="1 1"/><g transform="translate(82,210)"><rect x="6" y="0.5" width="6" height="12" fill="#fff"/><path d="M0 0.5 H11.8 V4" stroke="#e0b660" stroke-width="1" fill="none"/><rect x="12" y="4" width="1.2" height="1.2" fill="#e0b060"/><path d="M7.5 12.5 H12.7 V10" stroke="#9a9a9a" stroke-width="1" fill="none"/><path d="M0.5 0.5 H6.5 V13.5 H0.5 Z" fill="#e0e48a" stroke="#e2b46a" stroke-width="1"/><rect x="5.5" y="1" width="1.6" height="12.8" fill="#e8a830"/><path d="M1.4 2.2 L3.8 3.6 L1.4 5 Z" fill="#fff"/><path d="M6.6 6.8 L8.6 4.2 V6.8" stroke="#3b40c8" stroke-width="1.2" fill="none"/><rect x="6.8" y="7.9" width="4.4" height="1.1" fill="#28a0b0"/><rect x="9" y="9.8" width="2" height="1" fill="#6aa8e8"/></g><line x1="71" y1="233.5" x2="80" y2="233.5" stroke="#888" stroke-width="1" stroke-dasharray="1 1"/><g transform="translate(82,226)"><rect x="6" y="0.5" width="6" height="12" fill="#fff"/><path d="M0 0.5 H11.8 V4" stroke="#e0b660" stroke-width="1" fill="none"/><rect x="12" y="4" width="1.2" height="1.2" fill="#e0b060"/><path d="M7.5 12.5 H12.7 V10" stroke="#9a9a9a" stroke-width="1" fill="none"/><path d="M0.5 0.5 H6.5 V13.5 H0.5 Z" fill="#e0e48a" stroke="#e2b46a" stroke-width="1"/><rect x="5.5" y="1" width="1.6" height="12.8" fill="#e8a830"/><path d="M1.4 2.2 L3.8 3.6 L1.4 5 Z" fill="#fff"/><path d="M6.6 6.8 L8.6 4.2 V6.8" stroke="#3b40c8" stroke-width="1.2" fill="none"/><rect x="6.8" y="7.9" width="4.4" height="1.1" fill="#28a0b0"/><rect x="9" y="9.8" width="2" height="1" fill="#6aa8e8"/></g><line x1="71" y1="249.5" x2="80" y2="249.5" stroke="#888" stroke-width="1" stroke-dasharray="1 1"/><g transform="translate(82,242)"><rect x="6" y="0.5" width="6" height="12" fill="#fff"/><path d="M0 0.5 H11.8 V4" stroke="#e0b660" stroke-width="1" fill="none"/><rect x="12" y="4" width="1.2" height="1.2" fill="#e0b060"/><path d="M7.5 12.5 H12.7 V10" stroke="#9a9a9a" stroke-width="1" fill="none"/><path d="M0.5 0.5 H6.5 V13.5 H0.5 Z" fill="#e0e48a" stroke="#e2b46a" stroke-width="1"/><rect x="5.5" y="1" width="1.6" height="12.8" fill="#e8a830"/><path d="M1.4 2.2 L3.8 3.6 L1.4 5 Z" fill="#fff"/><path d="M6.6 6.8 L8.6 4.2 V6.8" stroke="#3b40c8" stroke-width="1.2" fill="none"/><rect x="6.8" y="7.9" width="4.4" height="1.1" fill="#28a0b0"/><rect x="9" y="9.8" width="2" height="1" fill="#6aa8e8"/></g><line x1="56" y1="265.5" x2="61" y2="265.5" stroke="#888" stroke-width="1" stroke-dasharray="1 1"/><g transform="translate(63,258)"><path d="M3.5 0.5 H11.5 V10.5 H3.5 Z" fill="#e4e49a" stroke="#e2b878" stroke-width="1"/><path d="M0.5 1.3 H9.5 V13.5 H0.5 Z" fill="#e2e598" stroke="#e3b070" stroke-width="1"/><rect x="1.4" y="3" width="1.8" height="1" fill="#fff"/><path d="M5 3.2 H8.8 V13.8 H5 Z" fill="#d4b048"/><rect x="6.2" y="4" width="1.4" height="4" fill="#b8c890"/><path d="M9 4 H12.5 V10.5 H9 Z" fill="#fff" stroke="#dcb060" stroke-width="0.9"/><rect x="9.3" y="9.2" width="1.3" height="2" fill="#2a98d8"/><rect x="11.4" y="7.6" width="1.3" height="1.6" fill="#2a98d8"/></g><rect x="46.5" y="261.5" width="8" height="8" rx="1" fill="url(#exg)" stroke="#8f8f8f"/><rect x="48" y="265" width="5" height="1" fill="#2b48a0"/><rect x="50" y="263" width="1" height="5" fill="#2b48a0"/><line x1="56" y1="281.5" x2="61" y2="281.5" stroke="#888" stroke-width="1" stroke-dasharray="1 1"/><g transform="translate(63,274)"><path d="M3.5 0.5 H11.5 V10.5 H3.5 Z" fill="#e4e49a" stroke="#e2b878" stroke-width="1"/><path d="M0.5 1.3 H9.5 V13.5 H0.5 Z" fill="#e2e598" stroke="#e3b070" stroke-width="1"/><rect x="1.4" y="3" width="1.8" height="1" fill="#fff"/><path d="M5 3.2 H8.8 V13.8 H5 Z" fill="#d4b048"/><rect x="6.2" y="4" width="1.4" height="4" fill="#b8c890"/><path d="M9 4 H12.5 V10.5 H9 Z" fill="#fff" stroke="#dcb060" stroke-width="0.9"/><rect x="9.3" y="9.2" width="1.3" height="2" fill="#2a98d8"/><rect x="11.4" y="7.6" width="1.3" height="1.6" fill="#2a98d8"/></g><rect x="46.5" y="277.5" width="8" height="8" rx="1" fill="url(#exg)" stroke="#8f8f8f"/><rect x="48" y="281" width="5" height="1" fill="#2b48a0"/><rect x="50" y="279" width="1" height="5" fill="#2b48a0"/><line x1="56" y1="297.5" x2="61" y2="297.5" stroke="#888" stroke-width="1" stroke-dasharray="1 1"/><g transform="translate(63,290)"><path d="M3.5 0.5 H11.5 V10.5 H3.5 Z" fill="#e4e49a" stroke="#e2b878" stroke-width="1"/><path d="M0.5 1.3 H9.5 V13.5 H0.5 Z" fill="#e2e598" stroke="#e3b070" stroke-width="1"/><rect x="1.4" y="3" width="1.8" height="1" fill="#fff"/><path d="M5 3.2 H8.8 V13.8 H5 Z" fill="#d4b048"/><rect x="6.2" y="4" width="1.4" height="4" fill="#b8c890"/><path d="M9 4 H12.5 V10.5 H9 Z" fill="#fff" stroke="#dcb060" stroke-width="0.9"/><rect x="9.3" y="9.2" width="1.3" height="2" fill="#2a98d8"/><rect x="11.4" y="7.6" width="1.3" height="1.6" fill="#2a98d8"/></g><rect x="46.5" y="293.5" width="8" height="8" rx="1" fill="url(#exg)" stroke="#8f8f8f"/><rect x="48" y="297" width="5" height="1" fill="#2b48a0"/><rect x="50" y="295" width="1" height="5" fill="#2b48a0"/><line x1="56" y1="313.5" x2="61" y2="313.5" stroke="#888" stroke-width="1" stroke-dasharray="1 1"/><g transform="translate(63,306)"><path d="M3.5 0.5 H11.5 V10.5 H3.5 Z" fill="#e4e49a" stroke="#e2b878" stroke-width="1"/><path d="M0.5 1.3 H9.5 V13.5 H0.5 Z" fill="#e2e598" stroke="#e3b070" stroke-width="1"/><rect x="1.4" y="3" width="1.8" height="1" fill="#fff"/><path d="M5 3.2 H8.8 V13.8 H5 Z" fill="#d4b048"/><rect x="6.2" y="4" width="1.4" height="4" fill="#b8c890"/><path d="M9 4 H12.5 V10.5 H9 Z" fill="#fff" stroke="#dcb060" stroke-width="0.9"/><rect x="9.3" y="9.2" width="1.3" height="2" fill="#2a98d8"/><rect x="11.4" y="7.6" width="1.3" height="1.6" fill="#2a98d8"/></g><rect x="46.5" y="309.5" width="8" height="8" rx="1" fill="url(#exg)" stroke="#8f8f8f"/><rect x="48" y="313" width="5" height="1" fill="#2b48a0"/><rect x="50" y="311" width="1" height="5" fill="#2b48a0"/><line x1="56" y1="329.5" x2="61" y2="329.5" stroke="#888" stroke-width="1" stroke-dasharray="1 1"/><g transform="translate(63,322)"><path d="M3.5 0.5 H11.5 V10.5 H3.5 Z" fill="#e4e49a" stroke="#e2b878" stroke-width="1"/><path d="M0.5 1.3 H9.5 V13.5 H0.5 Z" fill="#e2e598" stroke="#e3b070" stroke-width="1"/><rect x="1.4" y="3" width="1.8" height="1" fill="#fff"/><path d="M5 3.2 H8.8 V13.8 H5 Z" fill="#d4b048"/><rect x="6.2" y="4" width="1.4" height="4" fill="#b8c890"/><path d="M9 4 H12.5 V10.5 H9 Z" fill="#fff" stroke="#dcb060" stroke-width="0.9"/><rect x="9.3" y="9.2" width="1.3" height="2" fill="#2a98d8"/><rect x="11.4" y="7.6" width="1.3" height="1.6" fill="#2a98d8"/></g><rect x="46.5" y="325.5" width="8" height="8" rx="1" fill="url(#exg)" stroke="#8f8f8f"/><rect x="48" y="329" width="5" height="1" fill="#2b48a0"/><rect x="50" y="327" width="1" height="5" fill="#2b48a0"/><line x1="56" y1="345.5" x2="61" y2="345.5" stroke="#888" stroke-width="1" stroke-dasharray="1 1"/><g transform="translate(63,338)"><path d="M3.5 0.5 H11.5 V10.5 H3.5 Z" fill="#e4e49a" stroke="#e2b878" stroke-width="1"/><path d="M0.5 1.3 H9.5 V13.5 H0.5 Z" fill="#e2e598" stroke="#e3b070" stroke-width="1"/><rect x="1.4" y="3" width="1.8" height="1" fill="#fff"/><path d="M5 3.2 H8.8 V13.8 H5 Z" fill="#d4b048"/><rect x="6.2" y="4" width="1.4" height="4" fill="#b8c890"/><path d="M9 4 H12.5 V10.5 H9 Z" fill="#fff" stroke="#dcb060" stroke-width="0.9"/><rect x="9.3" y="9.2" width="1.3" height="2" fill="#2a98d8"/><rect x="11.4" y="7.6" width="1.3" height="1.6" fill="#2a98d8"/></g><rect x="46.5" y="341.5" width="8" height="8" rx="1" fill="url(#exg)" stroke="#8f8f8f"/><rect x="48" y="345" width="5" height="1" fill="#2b48a0"/><rect x="50" y="343" width="1" height="5" fill="#2b48a0"/><line x1="37" y1="361.5" x2="41" y2="361.5" stroke="#888" stroke-width="1" stroke-dasharray="1 1"/><g transform="translate(43,354)"><path d="M2 0 H11 V11 H0 V2 Z" fill="url(#fb)"/><path d="M5 3 H13 V12 L11 14 H3 V5 Z" fill="url(#fo)"/></g><rect x="27.5" y="357.5" width="8" height="8" rx="1" fill="url(#exg)" stroke="#8f8f8f"/><rect x="29" y="361" width="5" height="1" fill="#2b48a0"/><rect x="31" y="359" width="1" height="5" fill="#2b48a0"/><line x1="37" y1="377.5" x2="41" y2="377.5" stroke="#888" stroke-width="1" stroke-dasharray="1 1"/><g transform="translate(43,370)"><path d="M2 0 H11 V11 H0 V2 Z" fill="url(#fb)"/><path d="M5 3 H13 V12 L11 14 H3 V5 Z" fill="url(#fo)"/></g><rect x="27.5" y="373.5" width="8" height="8" rx="1" fill="url(#exg)" stroke="#8f8f8f"/><rect x="29" y="377" width="5" height="1" fill="#2b48a0"/><rect x="31" y="375" width="1" height="5" fill="#2b48a0"/></svg>
<div style="position:absolute;top:207.69px;font-size:11px;line-height:11px;color:#000;white-space:nowrap;text-decoration-skip-ink:none;letter-spacing:-0.045px;-webkit-text-stroke:0.15px #000;left:303.6px;">[BW/F/2/], Series, Journals</div>
<div style="position:absolute;top:223.69px;font-size:11px;line-height:11px;color:#000;white-space:nowrap;text-decoration-skip-ink:none;letter-spacing:-0.045px;-webkit-text-stroke:0.15px #000;left:322.4px;">[BW/F/2/1], File, Journal</div>
<div style="position:absolute;top:239.69px;font-size:11px;line-height:11px;color:#000;white-space:nowrap;text-decoration:underline;text-decoration-skip-ink:none;letter-spacing:-0.045px;-webkit-text-stroke:0.15px #000;left:322.4px;">[BW/F/2/2], File, Journal</div>
<div style="position:absolute;top:255.69px;font-size:11px;line-height:11px;color:#000;white-space:nowrap;text-decoration-skip-ink:none;letter-spacing:-0.045px;-webkit-text-stroke:0.15px #000;left:322.4px;">[BW/F/2/3], File, Journal</div>
<div style="position:absolute;top:271.69px;font-size:11px;line-height:11px;color:#000;white-space:nowrap;text-decoration-skip-ink:none;letter-spacing:-0.045px;-webkit-text-stroke:0.15px #000;left:322.4px;">[BW/F/2/4], File, Journal</div>
<div style="position:absolute;top:287.69px;font-size:11px;line-height:11px;color:#000;white-space:nowrap;text-decoration-skip-ink:none;letter-spacing:-0.045px;-webkit-text-stroke:0.15px #000;left:322.4px;">[BW/F/2/5], File, Journal</div>
<div style="position:absolute;top:303.69px;font-size:11px;line-height:11px;color:#000;white-space:nowrap;text-decoration-skip-ink:none;letter-spacing:-0.045px;-webkit-text-stroke:0.15px #000;left:322.4px;">[BW/F/2/6], File, Journal</div>
<div style="position:absolute;top:319.69px;font-size:11px;line-height:11px;color:#000;white-space:nowrap;text-decoration-skip-ink:none;letter-spacing:-0.045px;-webkit-text-stroke:0.15px #000;left:322.4px;">[BW/F/2/7], File, Journal</div>
<div style="position:absolute;top:335.69px;font-size:11px;line-height:11px;color:#000;white-space:nowrap;text-decoration-skip-ink:none;letter-spacing:-0.045px;-webkit-text-stroke:0.15px #000;left:303.6px;">[BW/F/3/], Series, Ledgers</div>
<div style="position:absolute;top:351.69px;font-size:11px;line-height:11px;color:#000;white-space:nowrap;text-decoration-skip-ink:none;letter-spacing:-0.045px;-webkit-text-stroke:0.15px #000;left:322.4px;">[BW/F/3/1], File, Ledger</div>
<div style="position:absolute;top:367.69px;font-size:11px;line-height:11px;color:#000;white-space:nowrap;text-decoration-skip-ink:none;letter-spacing:-0.045px;-webkit-text-stroke:0.15px #000;left:322.4px;">[BW/F/3/2], File, Ledger</div>
<div style="position:absolute;top:383.69px;font-size:11px;line-height:11px;color:#000;white-space:nowrap;text-decoration-skip-ink:none;letter-spacing:-0.045px;-webkit-text-stroke:0.15px #000;left:322.4px;">[BW/F/3/3], File, Ledger</div>
<div style="position:absolute;top:399.69px;font-size:11px;line-height:11px;color:#000;white-space:nowrap;text-decoration-skip-ink:none;letter-spacing:-0.045px;-webkit-text-stroke:0.15px #000;left:322.4px;">[BW/F/3/4], File, Ledger</div>
<div style="position:absolute;top:415.69px;font-size:11px;line-height:11px;color:#000;white-space:nowrap;text-decoration-skip-ink:none;letter-spacing:-0.045px;-webkit-text-stroke:0.15px #000;left:322.4px;">[BW/F/3/5], File, Ledger</div>
<div style="position:absolute;top:431.69px;font-size:11px;line-height:11px;color:#000;white-space:nowrap;text-decoration-skip-ink:none;letter-spacing:-0.045px;-webkit-text-stroke:0.15px #000;left:322.4px;">[BW/F/3/6], File, Cottage Repairs Ledger</div>
<div style="position:absolute;top:447.69px;font-size:11px;line-height:11px;color:#000;white-space:nowrap;text-decoration-skip-ink:none;letter-spacing:-0.045px;-webkit-text-stroke:0.15px #000;left:322.4px;">[BW/F/3/7], File, Cottage Repairs Ledger</div>
<div style="position:absolute;top:463.69px;font-size:11px;line-height:11px;color:#000;white-space:nowrap;text-decoration-skip-ink:none;letter-spacing:-0.045px;-webkit-text-stroke:0.15px #000;left:303.6px;">[BW/F/4/], Series, Balance Books</div>
<div style="position:absolute;top:479.69px;font-size:11px;line-height:11px;color:#000;white-space:nowrap;text-decoration-skip-ink:none;letter-spacing:-0.045px;-webkit-text-stroke:0.15px #000;left:303.6px;">[BW/F/5/], Series, Rate and Tax Account Books</div>
<div style="position:absolute;top:495.69px;font-size:11px;line-height:11px;color:#000;white-space:nowrap;text-decoration-skip-ink:none;letter-spacing:-0.045px;-webkit-text-stroke:0.15px #000;left:303.6px;">[BW/F/6/], Series, Comparison of General Accounts</div>
<div style="position:absolute;top:511.69px;font-size:11px;line-height:11px;color:#000;white-space:nowrap;text-decoration-skip-ink:none;letter-spacing:-0.045px;-webkit-text-stroke:0.15px #000;left:303.6px;">[BW/F/7/], Series, Analysis of Income and Expenditure</div>
<div style="position:absolute;top:527.69px;font-size:11px;line-height:11px;color:#000;white-space:nowrap;text-decoration-skip-ink:none;letter-spacing:-0.045px;-webkit-text-stroke:0.15px #000;left:303.6px;">[BW/F/8/], Series, Walkden Land Company, accounts and other financial records</div>
<div style="position:absolute;top:543.69px;font-size:11px;line-height:11px;color:#000;white-space:nowrap;text-decoration-skip-ink:none;letter-spacing:-0.045px;-webkit-text-stroke:0.15px #000;left:303.6px;">[BW/F/9/], Series, Records relating to Debenture Stock, Shareholders and Investments</div>
<div style="position:absolute;top:559.69px;font-size:11px;line-height:11px;color:#000;white-space:nowrap;text-decoration-skip-ink:none;letter-spacing:-0.045px;-webkit-text-stroke:0.15px #000;left:284.4px;">[BW/M/], Fonds, Manorial Records</div>
<div style="position:absolute;top:575.69px;font-size:11px;line-height:11px;color:#000;white-space:nowrap;text-decoration-skip-ink:none;letter-spacing:-0.045px;-webkit-text-stroke:0.15px #000;left:284.4px;">[BW/P/], Fonds, Printed Material</div>
</div>
<div style="position:absolute;left:1px;top:612px;width:838px;height:2px;background:#d2d2d2"></div>
<div style="position:absolute;left:1px;top:614px;width:838px;height:1px;background:#fbfbfb"></div>
<div style="position:absolute;left:1px;top:615px;width:838px;height:20px;background:#f0f0f0"></div>
<div style="position:absolute;left:51px;top:619px;width:1px;height:15px;background:#c8c8c8"></div>
<div style="position:absolute;left:687px;top:619px;width:1px;height:15px;background:#c8c8c8"></div>
<div style="position:absolute;left:737px;top:619px;width:1px;height:15px;background:#c8c8c8"></div>
<div style="position:absolute;left:787px;top:619px;width:1px;height:15px;background:#c8c8c8"></div>
<div style="position:absolute;top:619.67px;font-size:11.5px;line-height:11.5px;color:#111;white-space:nowrap;letter-spacing:-0.5px;left:9.5px;">Display</div>
<div style="position:absolute;top:619.67px;font-size:11.5px;line-height:11.5px;color:#111;white-space:nowrap;letter-spacing:-0.1px;left:57px;">Object 2 of 2</div>
<div style="position:absolute;top:619.67px;font-size:11.5px;line-height:11.5px;color:#111;white-space:nowrap;letter-spacing:-0.25px;left:704px;">emu</div>
<div style="position:absolute;top:619.67px;font-size:11.5px;line-height:11.5px;color:#111;white-space:nowrap;letter-spacing:-0.25px;left:749px;">Admin</div>
<div style="position:absolute;top:619.67px;font-size:11.5px;line-height:11.5px;color:#111;white-space:nowrap;letter-spacing:-0.25px;left:799px;">20007</div>
<div style="position:absolute;left:0px;top:0px;width:840px;height:636px;border:1px solid #111;"></div>
</body></html>
